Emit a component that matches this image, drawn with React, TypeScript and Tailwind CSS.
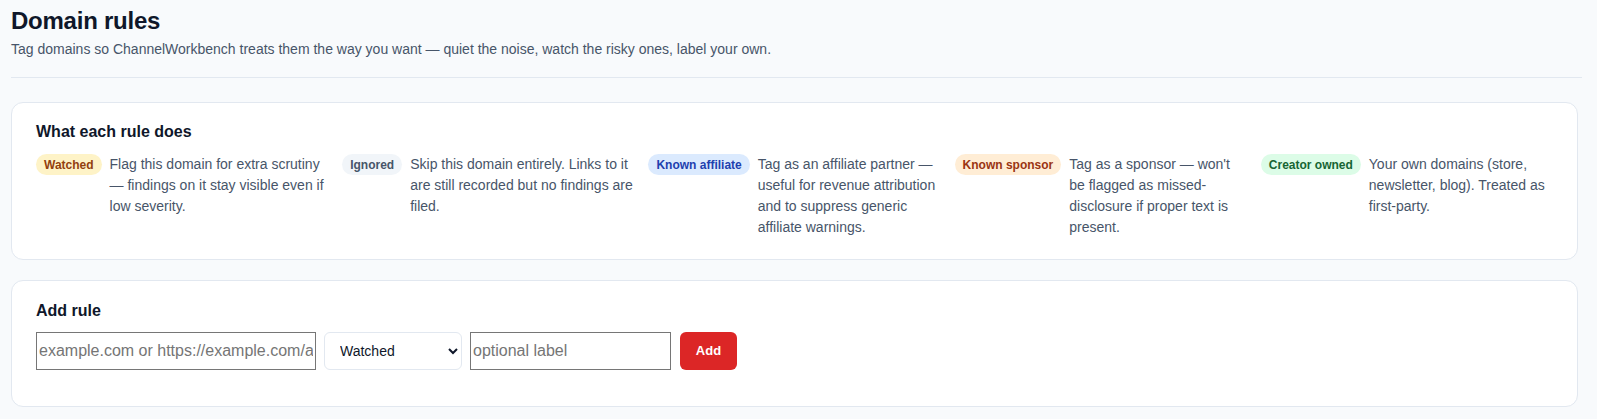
import React from "react";

interface RuleInfo {
  label: string;
  badge: string;
  text: string;
}

const rules: RuleInfo[] = [
  {
    label: "Watched",
    badge: "bg-[#fef3c7] text-[#92400e]",
    text: "Flag this domain for extra scrutiny — findings on it stay visible even if low severity.",
  },
  {
    label: "Ignored",
    badge: "bg-[#f1f5f9] text-[#475569]",
    text: "Skip this domain entirely. Links to it are still recorded but no findings are filed.",
  },
  {
    label: "Known affiliate",
    badge: "bg-[#dbeafe] text-[#1e40af]",
    text: "Tag as an affiliate partner — useful for revenue attribution and to suppress generic affiliate warnings.",
  },
  {
    label: "Known sponsor",
    badge: "bg-[#ffedd5] text-[#9a3412]",
    text: "Tag as a sponsor — won't be flagged as missed-disclosure if proper text is present.",
  },
  {
    label: "Creator owned",
    badge: "bg-[#dcfce7] text-[#166534]",
    text: "Your own domains (store, newsletter, blog). Treated as first-party.",
  },
];

export default function App() {
  return (
    <div className="min-h-screen bg-[#f8fafc] pl-[11px] pr-[15px] pt-[6px] font-['Liberation_Sans',Arial,sans-serif] text-[#0f172a]">
      <h1 className="text-2xl font-bold tracking-[-0.01em] leading-[30px]">Domain rules</h1>
      <p className="mt-[3px] text-sm leading-5 text-[#475569]">
        Tag domains so ChannelWorkbench treats them the way you want — quiet the noise, watch the risky ones, label your own.
      </p>
      <hr className="mt-[18px] border-0 border-t border-[#e2e8f0]" />

      <div className="mt-[24px] mr-[4px] rounded-xl border border-[#e2e8f0] bg-white px-6 pt-[19px] pb-[21px]">
        <h3 className="text-base font-bold leading-5">What each rule does</h3>
        <div className="mt-[12px] grid grid-cols-5 gap-x-[14px]">
          {rules.map((r) => (
            <div key={r.label} className="flex items-start gap-2">
              <span className={`shrink-0 rounded-full px-2 h-[21px] flex items-center text-xs font-bold ${r.badge}`}>
                {r.label}
              </span>
              <p className="text-sm leading-[21px] text-[#475569]">{r.text}</p>
            </div>
          ))}
        </div>
      </div>

      <div className="mt-[20px] mr-[4px] rounded-xl border border-[#e2e8f0] bg-white px-6 pt-[20px] pb-[36px]">
        <h3 className="text-base font-bold leading-5">Add rule</h3>
        <div className="mt-[11px] flex items-center gap-2">
          <input
            className="h-[38px] w-[280px] border border-[#767676] bg-white px-[2px] text-base placeholder:text-[#757575] outline-none"
            placeholder="example.com or https://example.com/affiliate"
          />
          <select
            defaultValue="watched"
            className="h-[38px] w-[138px] rounded-md border border-[#e2e8f0] bg-white pl-[11px] pr-2 text-[14px] text-[#0f172a]"
          >
            <option value="watched">Watched</option>
            <option value="ignored">Ignored</option>
            <option value="affiliate">Known affiliate</option>
            <option value="sponsor">Known sponsor</option>
            <option value="owned">Creator owned</option>
          </select>
          <input
            className="h-[38px] w-[201px] border border-[#767676] bg-white px-[2px] text-base placeholder:text-[#757575] outline-none"
            placeholder="optional label"
          />
          <button className="ml-[1px] h-[38px] w-[57px] rounded-md bg-[#dc2626] text-[13px] font-bold text-white">
            Add
          </button>
        </div>
      </div>
    </div>
  );
}
